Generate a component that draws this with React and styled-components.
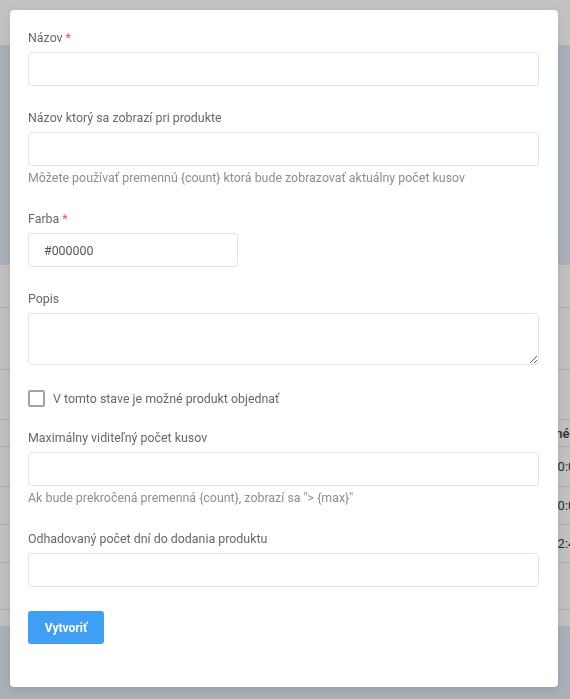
import React from 'react';
import styled, { createGlobalStyle } from 'styled-components';

const GlobalStyle = createGlobalStyle`
  html, body {
    margin: 0;
    padding: 0;
    overflow: hidden;
  }
  body {
    font-family: Roboto, "Noto Sans", Arial, sans-serif;
    background: #dde6ef;
  }
  * {
    box-sizing: border-box;
  }
`;

// background page (dimmed by overlay)
const Page = styled.div`
  width: 570px;
  height: 699px;
  display: flex;
  flex-direction: column;
  background: #dde6ef;
`;

const TopBar = styled.div`
  height: 45px;
  background: #ffffff;
  flex-shrink: 0;
`;

const Hero = styled.div`
  height: 220px;
  flex-shrink: 0;
`;

const Table = styled.div`
  background: #fdfdfd;
  display: flex;
  flex-direction: column;
`;

const Row = styled.div`
  height: ${(p) => p.h}px;
  border-bottom: 1px solid #e2e2e2;
  display: flex;
  align-items: center;
  padding-left: 511px;
  font-size: 13px;
  color: #3a3a3a;
  white-space: nowrap;
  font-weight: ${(p) => (p.head ? 500 : 400)};
`;

const Overlay = styled.div`
  position: fixed;
  inset: 0;
  background: rgba(0, 0, 0, 0.24);
  padding: 10px 12px 13px 10px;
`;

const Modal = styled.div`
  width: 548px;
  background: #ffffff;
  border-radius: 4px;
  box-shadow: 0 2px 10px rgba(0, 0, 0, 0.12);
  padding: 18px 18px 43px 18px;
`;

const Group = styled.div`
  margin-bottom: ${(p) => (p.mb !== undefined ? p.mb : 22)}px;
`;

const Label = styled.label`
  display: block;
  font-size: 12.4px;
  line-height: 20px;
  color: #686868;
  margin-bottom: 4px;
`;

const Req = styled.span`
  color: #ef5350;
  margin-left: 3px;
`;

const Input = styled.input`
  display: block;
  width: ${(p) => p.w || '511px'};
  height: 34px;
  border: 1px solid #e2e2e2;
  border-radius: 4px;
  padding: 0 15px;
  font-family: Roboto, "Noto Sans", Arial, sans-serif;
  font-size: 12.4px;
  color: #555555;
  outline: none;
  background: #ffffff;
`;

const TextArea = styled.textarea`
  display: block;
  width: 511px;
  height: 52px;
  border: 1px solid #e2e2e2;
  border-radius: 4px;
  padding: 8px 15px;
  font-family: Roboto, "Noto Sans", Arial, sans-serif;
  font-size: 12.4px;
  color: #555555;
  outline: none;
  resize: vertical;
  margin: 0;
`;

const Help = styled.div`
  font-size: 12.4px;
  line-height: 18px;
  color: #8e8e8e;
  margin-top: 3px;
`;

const CheckRow = styled.label`
  display: flex;
  align-items: center;
  height: 22px;
  gap: 8px;
  font-size: 12.4px;
  color: #686868;
  margin-bottom: 19px;
  cursor: pointer;
`;

const Check = styled.input`
  appearance: none;
  width: 17px;
  height: 17px;
  margin: 0;
  border: 2px solid #a3a3a3;
  border-radius: 2px;
  background: #ffffff;
`;

const Button = styled.button`
  display: block;
  margin-top: 2px;
  width: 76px;
  height: 33px;
  border: none;
  border-radius: 3px;
  background: #3e9ff4;
  color: #ffffff;
  font-family: Roboto, "Noto Sans", Arial, sans-serif;
  font-size: 12px;
  font-weight: 700;
  cursor: pointer;
`;

export default function App() {
  return (
    <>
      <GlobalStyle />
      <Page>
        <TopBar />
        <Hero />
        <Table>
          <Row h={43} />
          <Row h={62} />
          <Row h={50} />
          <Row h={27} head>Vytvorené</Row>
          <Row h={40}>15.03. 10:05</Row>
          <Row h={38}>14.03. 10:02</Row>
          <Row h={38}>12.03. 12:45</Row>
          <Row h={47} />
          <Row h={17} />
        </Table>
      </Page>
      <Overlay>
        <Modal>
          <Group>
            <Label>Názov<Req>*</Req></Label>
            <Input />
          </Group>
          <Group>
            <Label>Názov ktorý sa zobrazí pri produkte</Label>
            <Input />
            <Help>Môžete používať premennú {'{count}'} ktorá bude zobrazovať aktuálny počet kusov</Help>
          </Group>
          <Group>
            <Label>Farba<Req>*</Req></Label>
            <Input w="210px" defaultValue="#000000" />
          </Group>
          <Group>
            <Label>Popis</Label>
            <TextArea />
          </Group>
          <CheckRow>
            <Check type="checkbox" />
            V tomto stave je možné produkt objednať
          </CheckRow>
          <Group>
            <Label>Maximálny viditeľný počet kusov</Label>
            <Input />
            <Help>Ak bude prekročená premenná {'{count}'}, zobrazí sa "&gt; {'{max}'}"</Help>
          </Group>
          <Group mb={24}>
            <Label>Odhadovaný počet dní do dodania produktu</Label>
            <Input />
          </Group>
          <Button>Vytvoriť</Button>
        </Modal>
      </Overlay>
    </>
  );
}
